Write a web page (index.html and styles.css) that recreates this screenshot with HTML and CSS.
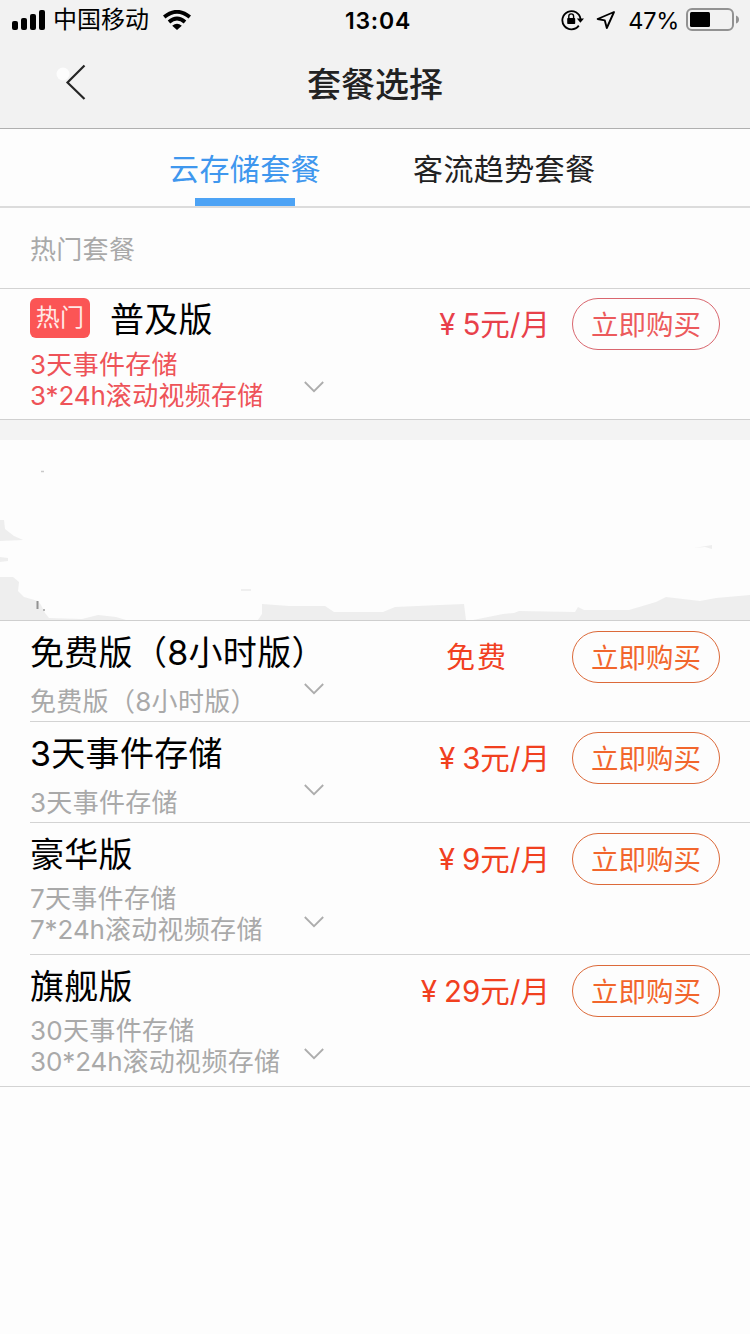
FILE: index.html
```html
<!DOCTYPE html>
<html lang="zh-CN">
<head>
<meta charset="utf-8">
<title>套餐选择</title>
<link rel="stylesheet" href="styles.css">
</head>
<body>
<header class="header">
  <div class="status">
    <div class="status-left">
      <svg class="signal" width="34" height="20" viewBox="0 0 34 20"><rect x="0" y="11" width="6" height="9" rx="2"/><rect x="9" y="8" width="6" height="12" rx="2"/><rect x="18" y="4" width="6" height="16" rx="2"/><rect x="27" y="0" width="6" height="20" rx="2"/></svg>
      <span class="carrier">中国移动</span>
      <svg class="wifi" width="28" height="20" viewBox="0 0 28 20"><path d="M1.2 7Q14 -3.4 26.8 7M6 12Q14 5 22 12" fill="none" stroke="#000" stroke-width="3.8"/><path d="M9.2 15.8Q14 11.8 18.8 15.8L14 20Z"/></svg>
    </div>
    <span class="clock">13:04</span>
    <div class="status-right">
      <svg class="lock" width="24" height="22" viewBox="0 0 24 22"><path d="M17.8 16.6A9.1 9.1 0 1 1 19.5 10" fill="none" stroke="#000" stroke-width="1.8"/><path d="M15.8 9.5h7.2l-3.6 4.2z"/><rect x="6.2" y="9" width="8" height="6" rx=".8"/><path d="M7.8 9.5V7.3a2.4 2.4 0 0 1 4.8 0v2.2" fill="none" stroke="#000" stroke-width="1.4"/></svg>
      <svg class="locate" width="20" height="20" viewBox="0 0 20 20"><path d="M18 2L1.6 9L8.8 10.4L10.8 18Z" fill="none" stroke="#000" stroke-width="1.9" stroke-linejoin="round"/></svg>
      <span class="percent">47%</span>
      <svg class="battery" width="54" height="24" viewBox="0 0 54 24"><rect x="1" y="1" width="46" height="21" rx="5" fill="none" stroke="#929292" stroke-width="2"/><rect x="4" y="4" width="20" height="15" rx="1.5"/><path d="M50 7.5Q53 8.5 53 11.5T50 15.5Z" fill="#929292"/></svg>
    </div>
  </div>
  <div class="navbar">
    <svg class="back" width="32" height="40" viewBox="0 0 32 40"><circle cx="7" cy="11" r="6.5" fill="#fdfdfd"/><path d="M28.5 2.5L11.5 19.5L28.5 36" fill="none" stroke="#252525" stroke-width="2.2"/></svg>
    <h1 class="heading">套餐选择</h1>
  </div>
</header>

<nav class="tabs">
  <a class="tab tab-active">云存储套餐</a>
  <a class="tab">客流趋势套餐</a>
</nav>

<section class="group">
  <h2 class="group-title">热门套餐</h2>
  <article class="plan plan-hot">
    <div class="info">
      <div class="name"><span class="badge">热门</span>普及版</div>
      <div class="desc"><p>3天事件存储</p><p><span class="num">3*24h</span>滚动视频存储</p></div>
    </div>
    <svg class="chevron" width="20" height="12" viewBox="0 0 20 12"><path d="M.8 1L10 10.2L19.2 1"/></svg>
    <div class="price"><span class="yen">¥</span>5元/月</div>
    <button class="buy">立即购买</button>
  </article>
</section>

<svg class="cover" width="750" height="180" viewBox="0 0 750 180">
  <g fill="#eeeeee">
    <path d="M0 80L4 80L5 89L14 96L23 100L0 101ZM0 117L8 118L8 121L0 122Z"/>
    <path d="M0 137L13 137L19 142L18 151L24 157L38 161L41 165L45 173L49 178L82 179L98 175L116 177L126 180H0Z"/>
    <path d="M258 180L262 174L262 164L289 166L325 166L334 172L383 172L395 167L440 165L464 164L466 180Z"/>
    <path d="M473 180L503 174L514 173L519 171L575 172L578 167L584 170L629 170L656 162L666 157L700 161L716 158L750 155V180Z"/>
    <path d="M694 108L712 105V109L705 107Z"/>
  </g>
  <path d="M41 31.5H44" stroke="#c9c9c9" stroke-width="1.5"/>
  <path d="M241 150H251" stroke="#efefef" stroke-width="2"/>
  <path d="M37.5 161V169" stroke="#929292" stroke-width="2"/>
  <path d="M43 170H45" stroke="#b5b5b5" stroke-width="2"/>
</svg>

<section class="group list">
  <article class="plan">
    <div class="info">
      <div class="name">免费版（8小时版）</div>
      <div class="desc"><p>免费版（8小时版）</p></div>
    </div>
    <svg class="chevron" width="20" height="12" viewBox="0 0 20 12"><path d="M.8 1L10 10.2L19.2 1"/></svg>
    <div class="price price-free">免费</div>
    <button class="buy">立即购买</button>
  </article>
  <article class="plan">
    <div class="info">
      <div class="name">3天事件存储</div>
      <div class="desc"><p>3天事件存储</p></div>
    </div>
    <svg class="chevron" width="20" height="12" viewBox="0 0 20 12"><path d="M.8 1L10 10.2L19.2 1"/></svg>
    <div class="price"><span class="yen">¥</span>3元/月</div>
    <button class="buy">立即购买</button>
  </article>
  <article class="plan plan-tall">
    <div class="info">
      <div class="name">豪华版</div>
      <div class="desc"><p>7天事件存储</p><p><span class="num">7*24h</span>滚动视频存储</p></div>
    </div>
    <svg class="chevron" width="20" height="12" viewBox="0 0 20 12"><path d="M.8 1L10 10.2L19.2 1"/></svg>
    <div class="price"><span class="yen">¥</span>9元/月</div>
    <button class="buy">立即购买</button>
  </article>
  <article class="plan plan-tall">
    <div class="info">
      <div class="name">旗舰版</div>
      <div class="desc"><p>30天事件存储</p><p><span class="num">30*24h</span>滚动视频存储</p></div>
    </div>
    <svg class="chevron" width="20" height="12" viewBox="0 0 20 12"><path d="M.8 1L10 10.2L19.2 1"/></svg>
    <div class="price"><span class="yen">¥</span>29元/月</div>
    <button class="buy">立即购买</button>
  </article>
</section>
</body>
</html>
```
FILE: styles.css
```css
* { box-sizing: border-box; margin: 0; padding: 0; }
body {
  width: 750px;
  min-height: 1334px;
  background: #fdfdfd;
  color: #000;
  font-family: Inter, "Noto Sans CJK SC", sans-serif;
  font-weight: 390;
}
svg { display: block; flex: none; }

.header { height: 129px; background: #f2f2f2; border-bottom: 1px solid #b0b0b0; }
.status {
  display: grid;
  grid-template-columns: 1fr auto 1fr;
  align-items: center;
  height: 40px;
  padding: 0 10px 0 12px;
  font-size: 24px;
}
.status-left, .status-right { display: flex; align-items: center; height: 40px; }
.status-right { justify-content: flex-end; }
.carrier { margin: 0 14px 0 7px; line-height: 40px; }
.clock { padding: 1px 0 0 4px; font-size: 23px; font-weight: 600; letter-spacing: .8px; }
.lock { margin-right: 11px; }
.locate { margin-right: 12px; }
.percent { padding-top: 1px; font-size: 23.5px; font-weight: 400; letter-spacing: -.3px; margin-right: 7px; }

.navbar { display: grid; grid-template-columns: 1fr auto 1fr; height: 88px; align-items: center; }
.back { margin-left: 56px; margin-bottom: 4px; }
.heading { font-size: 34px; font-weight: 500; line-height: 90px; color: #222; }

.tabs {
  display: flex;
  height: 79px;
  padding-left: 169px;
  gap: 92px;
  border-bottom: 2px solid #dcdcdc;
}
.tab {
  display: flex;
  flex-direction: column;
  align-items: center;
  font-size: 30px;
  letter-spacing: .4px;
  line-height: 80px;
  color: #222;
}
.tab-active { color: #3f97ee; }
.tab-active::after { content: ""; width: 100px; height: 8px; margin-top: -11px; background: #4da3f5; }

.group-title {
  height: 81px;
  padding: 1px 0 0 30px;
  border-bottom: 1px solid #d3d3d3;
  font-size: 26px;
  font-weight: 390;
  line-height: 81px;
  letter-spacing: .3px;
  color: #a9a9a9;
}
.plan { display: flex; height: 101px; margin-left: 30px; padding-right: 30px; border-bottom: 1px solid #d3d3d3; }
.plan-tall { height: 132px; }
.info { width: 274px; white-space: nowrap; }
.name { display: flex; align-items: center; height: 60px; padding-bottom: 2px; font-size: 34px; letter-spacing: .3px; }
.desc {
  display: flex;
  flex-direction: column;
  justify-content: center;
  min-height: 40px;
  font-size: 26px;
  line-height: 31px;
  letter-spacing: .3px;
  color: #a9a9a9;
}
.num { letter-spacing: -.1px; }
.chevron { align-self: flex-end; margin-bottom: 26px; fill: none; stroke: #adadad; stroke-width: 1.8; }
.price {
  flex: 1;
  padding: 10px 22px 0 0;
  text-align: right;
  white-space: nowrap;
  font-size: 29.5px;
  line-height: 52px;
  color: #f1401f;
}
.price-free { padding: 11px 64px 0 0; font-size: 29px; letter-spacing: 2px; }
.yen { margin-right: 7px; }
.buy {
  width: 148px;
  height: 52px;
  margin-top: 10px;
  padding-top: 1px;
  border: 1px solid #dc6a3a;
  border-radius: 26px;
  background: transparent;
  font: inherit;
  font-size: 27.5px;
  line-height: 48px;
  color: #f2662c;
}
.list { border-top: 1px solid #cfcfcf; }
.list .plan:last-child { margin-left: 0; padding-left: 30px; }

.plan-hot { height: 151px; margin-left: 0; padding-left: 30px; border-bottom: 20px solid #f3f3f3; box-shadow: inset 0 -1px #d0d0d0; }
.plan-hot .name { height: 59px; }
.plan-hot .desc, .plan-hot .price { color: #ee5358; }
.plan-hot .desc { padding-top: 1px; }
.plan-hot .price { padding-top: 9px; color: #e8404a; }
.plan-hot .buy { margin-top: 9px; border-color: #d9666e; color: #ec5a5c; }
.plan-hot .chevron { margin-bottom: 27px; }
.badge {
  width: 60px;
  height: 40px;
  margin-right: 20px;
  border-radius: 6px;
  background: #fb5555;
  color: #ffe9e6;
  font-size: 24px;
  line-height: 40px;
  text-align: center;
}
```
